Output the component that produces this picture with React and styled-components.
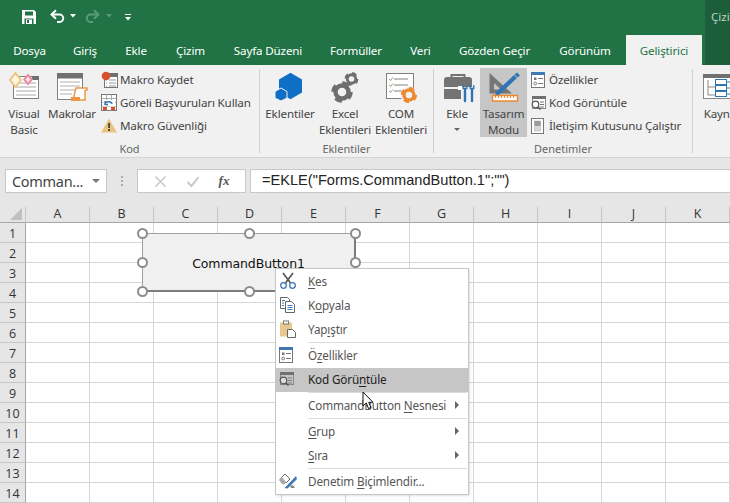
import React from "react";
import styled, { createGlobalStyle } from "styled-components";

const Global = createGlobalStyle`
  html, body { margin: 0; padding: 0; background: #fff; overflow: hidden; }
  body { font-family: "Open Sans", "Noto Sans", sans-serif; }
`;
const UI = `"Noto Sans", "Open Sans", sans-serif`;

const Page = styled.div`position: relative; width: 730px; height: 503px; overflow: hidden; background: #fff;`;
const Top = styled.div`display: flex; height: 65px; background: #217346;`;
const TopMain = styled.div`width: 705px; display: flex; flex-direction: column;`;
const Qat = styled.div`height: 35px; display: flex; align-items: flex-start; padding: 9px 0 0 21px; box-sizing: border-box;`;
const Tabs = styled.div`height: 30px; display: flex;`;
const Tab = styled.div`
  width: ${p => p.$w}px; display: flex; align-items: center; justify-content: center;
  font: 11.6px ${UI}; white-space: nowrap; letter-spacing: -0.15px;
  color: ${p => (p.$active ? "#217346" : "#fff")};
  background: ${p => (p.$active ? "#f1f1f1" : "transparent")};
`;
const Contextual = styled.div`
  width: 25px; background: #1c5e39; color: #b9d2c4; font: 11.6px ${UI}; padding: 9px 0 0 6px; box-sizing: border-box; overflow: hidden; white-space: nowrap;
`;

const Ribbon = styled.div`display: flex; height: 93px; background: #f1f1f1; border-bottom: 1px solid #d4d4d4; box-sizing: border-box; overflow: hidden;`;
const Group = styled.div`
  width: ${p => p.$w}px; flex: none; position: relative; display: flex; flex-direction: column; box-sizing: border-box;
  padding-top: 3px;
`;
const Sep = styled.div`width: 1px; flex: none; margin: 4px 0 4px; background: #d0d0d0;`;
const GroupBody = styled.div`display: flex; height: 69px;`;
const GroupName = styled.div`
  text-align: center; font: 11px/16px ${UI}; color: #666; margin-top: 4px;
`;
const Large = styled.div`
  width: ${p => p.$w}px; flex: none; height: 69px; display: flex; flex-direction: column; align-items: center;
  background: ${p => (p.$on ? "#c6c6c6" : "transparent")};
  font: 11.6px/16px ${UI}; color: #444; letter-spacing: -0.15px;
  svg { flex: none; display: block; }
`;
const LargeText = styled.span`white-space: nowrap; text-align: center;`;
const Caret = styled.span`
  width: 0; height: 0; margin-top: 6px; border: 3px solid transparent; border-top: 3px solid #666; border-bottom: 0;
`;
const SmallCol = styled.div`display: flex; flex-direction: column; margin-left: ${p => p.$ml}px;`;
const Small = styled.div`
  height: 23px; display: flex; align-items: center; font: 11.6px ${UI}; color: #444; white-space: nowrap; letter-spacing: -0.15px;
  svg { flex: none; }
`;

const FormulaBar = styled.div`
  height: 49px; background: #e6e6e6; display: flex; align-items: flex-start; padding: 11px 0 0 5px; box-sizing: border-box;
`;
const Field = styled.div`
  height: 24px; box-sizing: border-box; background: #fff; border: 1px solid #c8c8c8; display: flex; align-items: center;
`;
const NameBox = styled(Field)`width: 102px; font: 14.5px ${UI}; color: #444; padding-left: 6px; justify-content: space-between; letter-spacing: -0.3px;`;
const Drop = styled.span`
  width: 0; height: 0; margin-right: 6px; border: 4px solid transparent; border-top: 4px solid #777; border-bottom: 0;
`;
const Dots = styled.div`
  width: 30px; flex: none; display: flex; flex-direction: column; align-items: center; gap: 2px; padding-top: 7px;
  span { width: 2px; height: 2px; background: #aaa; }
`;
const FxBox = styled(Field)`width: 109px; justify-content: space-around; padding: 0 6px; margin-right: 4px;`;
const Fx = styled.span`font: italic bold 13px "Liberation Serif", serif; color: #555;`;
const Formula = styled(Field)`
  flex: 1; border-right: 0; font: 14.6px "Liberation Sans", Arial, sans-serif; color: #222; padding: 0 0 2px 11px; white-space: nowrap;
`;

const Sheet = styled.div`
  display: grid; grid-template-columns: 26px repeat(11, 64px); grid-template-rows: 16px repeat(14, 20px);
`;
const Corner = styled.div`background: #e6e6e6; border-bottom: 1px solid #a6a6a6; border-right: 1px solid #c6c6c6; box-sizing: border-box; display: flex; justify-content: flex-end; align-items: flex-end; padding: 0 3px 2px 0;`;
const CornerMark = styled.span`width: 0; height: 0; border-style: solid; border-width: 0 0 12px 12px; border-color: transparent transparent #c0c0c0 transparent;`;
const ColHead = styled.div`
  background: #e6e6e6; border-bottom: 1px solid #a6a6a6; border-right: 1px solid #c6c6c6; box-sizing: border-box;
  font: 12.5px/14px "Open Sans", sans-serif; color: #333; text-align: center;
`;
const RowHead = styled.div`
  background: #e6e6e6; border-bottom: 1px solid #c6c6c6; border-right: 1px solid #a6a6a6; box-sizing: border-box;
  font: 12.5px/21px "Open Sans", sans-serif; color: #333; text-align: center;
`;
const Cell = styled.div`border-right: 1px solid #d6d6d6; border-bottom: 1px solid #d6d6d6; box-sizing: border-box; background: #fff;`;

const FormButton = styled.div`
  position: absolute; left: 142px; top: 233px; width: 214px; height: 59px; box-sizing: border-box;
  background: #f0f0f0; border-top: 1px solid #a0a0a0; border-left: 1px solid #a0a0a0; border-right: 2px solid #7c7c7c; border-bottom: 2px solid #7c7c7c;
  display: flex; align-items: center; justify-content: center; padding-top: 2px;
  font: 12.5px "DejaVu Sans", Verdana, sans-serif; color: #111; letter-spacing: -0.1px;
`;
const Handle = styled.span`
  position: absolute; width: 11px; height: 11px; box-sizing: border-box; border-radius: 50%;
  background: #fff; border: 2px solid #8c8c8c; left: ${p => p.$x - 5.5}px; top: ${p => p.$y - 5.5}px;
`;

const Menu = styled.div`
  position: absolute; left: 275px; top: 268px; width: 194px; height: 227px; box-sizing: border-box;
  background: #fff; border: 1px solid #c6c6c6; padding-top: 1px; box-shadow: 1px 1px 2px rgba(0,0,0,.12);
`;
const MenuRow = styled.div`
  height: 24px; display: flex; align-items: center; position: relative;
  font: 11.7px ${UI}; letter-spacing: -0.15px; white-space: nowrap; padding-bottom: 2px; box-sizing: border-box;
  color: ${p => (p.$hot ? "#222" : "#555")};
  background: ${p => (p.$hot ? "#c6c6c6" : "transparent")};
  u { text-underline-offset: 2px; text-decoration-thickness: 1px; }
`;
const MenuIcon = styled.span`width: 32px; flex: none; display: flex; justify-content: center; align-items: center; padding-right: 8px; box-sizing: border-box;`;
const MenuText = styled.span`flex: 1;`;
const Arrow = styled.span`
  width: 0; height: 0; margin-right: 9px; border-style: solid; border-width: 4px 0 4px 4px; border-color: transparent transparent transparent #666;
`;
const MenuSep = styled.div`height: 2px; box-sizing: border-box; margin: 0 1px 0 32px; border-top: 1px solid #dcdcdc;`;
const Cursor = styled.svg`position: absolute; left: 362px; top: 391px;`;

/* ---- drawings ---- */
const SaveIcon = () => (
  <svg width="16" height="16" viewBox="0 0 16 16"><path d="M1 1h12l2 2v12H1z" fill="#fff"/><rect x="4" y="2.500" width="8" height="4" fill="#217346"/><rect x="3.500" y="9.500" width="9" height="5.500" fill="#217346"/><rect x="5" y="10.500" width="6" height="4.500" fill="#fff"/><rect x="6" y="11" width="2" height="3" fill="#217346"/></svg>
);
const UndoIcon = ({ c, flip }) => (
  <svg width="15" height="15" viewBox="0 0 15 15" style={flip ? { transform: "scaleX(-1)" } : undefined}>
    <path d="M2 5.500h7.500a3.500 3.500 0 0 1 0 7.500H7" fill="none" stroke={c} strokeWidth="2"/><path d="M6 1.200 1.500 5.500 6 9.800" fill="none" stroke={c} strokeWidth="2"/>
  </svg>
);
const QatCaret = ({ c, ml, mr }) => (
  <svg width="6" height="4" style={{ margin: `5px ${mr}px 0 ${ml}px` }}><path d="M0 0h6L3 3.500z" fill={c}/></svg>
);
const CustomIcon = () => (
  <svg width="6" height="7" style={{ marginTop: 5 }}><rect width="6" height="1" fill="#fff"/><path d="M0 3h6L3 6.500z" fill="#fff"/></svg>
);
const VbIcon = () => (
  <svg width="40" height="38" viewBox="0 0 40 38">
    <rect x="9.500" y="8.500" width="25" height="22" fill="#fff" stroke="#808080"/><rect x="28" y="8" width="7" height="4" fill="#707070"/>
    <path d="M12 15h20M12 19h20M12 23h20M12 27h20" stroke="#a8a8a8"/>
    <path d="M11.500 5 17 12l-5.500 7L6 12z" fill="#fdf6e3" stroke="#ecc67e" strokeWidth="2"/>
    <path d="M24 7l3.800 4.500L24 16l-3.800-4.500z" fill="#fde7ea" stroke="#e98fa0" strokeWidth="2"/>
  </svg>
);
const MacroIcon = () => (
  <svg width="40" height="38" viewBox="0 0 40 38">
    <rect x="5.500" y="5.500" width="25" height="26" fill="#fff" stroke="#808080"/><rect x="5" y="5" width="26" height="5.500" fill="#707070"/>
    <path d="M8 14h20M8 18h20M8 22h20M8 26h12" stroke="#b0b0b0"/>
    <path d="M24 20h11v2l-2 .5V32H21z" fill="#fff" stroke="#ee9644" strokeWidth="1.500"/><rect x="19" y="29" width="9" height="4" fill="#ee9644"/>
  </svg>
);
const Hex = ({ cx, cy, r }) => {
  const h = r * 1.15;
  return <path d={`M${cx} ${cy - h}L${cx + r} ${cy - h / 2}V${cy + h / 2}L${cx} ${cy + h}L${cx - r} ${cy + h / 2}V${cy - h / 2}Z`} fill="#0f6fc6"/>;
};
const AddinIcon = () => (
  <svg width="40" height="38" viewBox="0 0 40 38"><Hex cx={20.500} cy={18} r={11.500}/><path d="M11 20l6 3.500V30l-6 3-6-3v-6.500z" fill="#0f6fc6" stroke="#f1f1f1" strokeWidth="1"/></svg>
);
const Gear = ({ cx, cy, r, c }) => (
  <g>
    <circle cx={cx} cy={cy} r={r * 0.62} fill="none" stroke={c} strokeWidth={r * 0.42}/>
    <circle cx={cx} cy={cy} r={r * 0.86} fill="none" stroke={c} strokeWidth={r * 0.32} strokeDasharray={`${r * 0.68} ${r * 0.67}`}/>
  </g>
);
const GearsIcon = () => (
  <svg width="40" height="38" viewBox="0 0 40 38"><Gear cx={17} cy={24} r={10.500} c="#6e6e6e"/><Gear cx={26.500} cy={11} r={6.800} c="#6e6e6e"/></svg>
);
const ComIcon = () => (
  <svg width="40" height="38" viewBox="0 0 40 38">
    <rect x="5.500" y="5.500" width="27" height="25" fill="#fff" stroke="#808080"/>
    <path d="M13 11h14M13 17h14M13 23h8" stroke="#808080"/><path d="M8 11l1.500 1.500L12 9.500M8 17l1.500 1.500L12 15.500M8 23l1.500 1.500L12 21.500" fill="none" stroke="#7aa86e"/>
    <circle cx="28" cy="27" r="8.500" fill="#f1f1f1"/><Gear cx={28} cy={27} r={8} c="#ec8a34"/>
  </svg>
);
const ToolboxIcon = () => (
  <svg width="40" height="38" viewBox="0 0 40 38">
    <path d="M14.500 9V7h13v2" fill="none" stroke="#737373" strokeWidth="2"/>
    <path d="M7 12a3 3 0 0 1 3-3h22a3 3 0 0 1 3 3v7H7z" fill="#737373"/><path d="M7 21h17v10H7z" fill="#737373"/>
    <rect x="21" y="18" width="4" height="4" fill="#fff"/>
    <path d="M28 21v12M35 21v12" stroke="#2f75b5" strokeWidth="2.400" strokeLinecap="round"/><path d="M26.200 17v3.500h3.600V17M33.200 17v3.500h3.600V17" fill="none" stroke="#2f75b5" strokeWidth="1.300"/>
  </svg>
);
const DesignIcon = () => (
  <svg width="40" height="38" viewBox="0 0 40 38">
    <path d="M5.500 5v20.500H28z" fill="#767676"/><path d="M10 15v6.500h7z" fill="#c6c6c6"/>
    <path d="M12 24 30 7l3 3L15 27l-4 1z" fill="#2f75b5"/><path d="M30.500 6.500 33 4.500l3 3-2.500 2z" fill="#2f75b5"/>
    <rect x="8.500" y="27.500" width="25" height="5.500" fill="#fff" stroke="#ec8a34" strokeWidth="1.500"/><path d="M11.500 28v2M14.500 28v2M17.500 28v2M20.500 28v2M23.500 28v2M26.500 28v2M29.500 28v2" stroke="#ec8a34"/>
  </svg>
);
const Rec = () => (
  <svg width="19" height="18" viewBox="0 0 19 18"><rect x="3.500" y="2.500" width="13" height="14" fill="#fff" stroke="#777"/><rect x="3" y="2" width="14" height="4" fill="#707070"/><path d="M8 9h7M8 12h7M8 15h7M5 9h1M5 12h1M5 15h1" stroke="#999"/><circle cx="5" cy="5" r="4.300" fill="#d9502e"/></svg>
);
const Rel = () => (
  <svg width="19" height="18" viewBox="0 0 19 18"><rect x=".5" y=".5" width="15" height="16" fill="#fff" stroke="#777"/><path d="M.5 4.500h15M5.500 .5v16M10.500 .5v16M.5 8.500h15M.5 12.500h15" stroke="#aaa"/><rect x="2" y="6" width="12" height="6.500" fill="#fff"/><path d="M4 10c0-3 7-3 7 0M4 7v3.500h3" fill="none" stroke="#2f75b5" strokeWidth="1.300"/><rect x="2" y="13" width="4" height="3" fill="#d9502e"/><rect x="10" y="13" width="4" height="3" fill="#d9502e"/></svg>
);
const Warn = () => (
  <svg width="19" height="18" viewBox="0 0 19 18"><path d="M8 1.500 16 15.500H0z" fill="#eac37f"/><rect x="7.200" y="6" width="1.800" height="5" fill="#444"/><rect x="7.200" y="12" width="1.800" height="2" fill="#444"/></svg>
);
const Props = ({ s = 18 }) => (
  <svg width={s} height={s} viewBox="0 0 18 18"><rect x=".5" y="1.500" width="13" height="15" fill="#fff" stroke="#777"/><rect x="0" y="1" width="14" height="3" fill="#3f78b5"/><rect x="3" y="6.500" width="2.500" height="2.500" fill="#777"/><circle cx="4.200" cy="12.500" r="1.400" fill="none" stroke="#777"/><path d="M7 7.500h5M7 12.500h5" stroke="#777"/></svg>
);
const CodeIcon = ({ dark }) => (
  <svg width="18" height="18" viewBox="0 0 18 18"><rect x="1.500" y="2.500" width="13" height="12" fill={dark ? "#c6c6c6" : "#fff"} stroke="#888"/><rect x="1" y="2" width="14" height="3" fill="#707070"/><path d="M9 8h4M9 10.500h4M9 13h4" stroke="#777"/><circle cx="4.500" cy="10.500" r="3.300" fill={dark ? "#ddd" : "#fff"} stroke="#555" strokeWidth="1.200"/><path d="M7 13l2.500 2.500" stroke="#555" strokeWidth="1.600"/></svg>
);
const DialogIcon = () => (
  <svg width="18" height="18" viewBox="0 0 18 18"><rect x=".5" y="1.500" width="12" height="15" fill="#fff" stroke="#777"/><rect x="3.500" y="4" width="6" height="10" fill="#d8d8d8" stroke="#aaa" strokeWidth=".5"/><rect x="3.500" y="4" width="6" height="5" fill="#9a9a9a"/></svg>
);
const TreeIcon = () => (
  <svg width="40" height="38" viewBox="0 0 40 38"><rect x=".5" y="6.500" width="39" height="24" fill="#fff" stroke="#888"/><rect x="0" y="6" width="40" height="4" fill="#707070"/><path d="M5 12v15h7M5 19h7" fill="none" stroke="#888"/><path d="M12 14h20M12 20h20M12 26h20" stroke="#2f75b5" strokeWidth="1"/><rect x="12.500" y="11.500" width="11" height="5" fill="#fff" stroke="#2f75b5"/><rect x="12.500" y="17.500" width="11" height="5" fill="#fff" stroke="#2f75b5"/><rect x="12.500" y="23.500" width="11" height="5" fill="#fff" stroke="#2f75b5"/></svg>
);
const Scissors = () => (
  <svg width="18" height="18" viewBox="0 0 18 18"><path d="M4 1l7.500 10M14 1 6.500 11" stroke="#555" strokeWidth="1.600"/><circle cx="4.500" cy="13.500" r="2.800" fill="none" stroke="#3f78b5" strokeWidth="1.300"/><circle cx="13.500" cy="13.500" r="2.800" fill="none" stroke="#3f78b5" strokeWidth="1.300"/></svg>
);
const CopyIcon = () => (
  <svg width="18" height="18" viewBox="0 0 18 18"><path d="M1.500 1.500h7l2 2v9h-9z" fill="#fff" stroke="#666"/><path d="M6.500 5.500h6l3 3v8h-9z" fill="#fff" stroke="#666"/><path d="M3 4.500h3M3 7h2M3 9.500h2M8.500 9.500h5M8.500 11.500h5M8.500 13.500h5" stroke="#3f78b5"/></svg>
);
const PasteIcon = () => (
  <svg width="18" height="18" viewBox="0 0 18 18"><rect x="1" y="2.500" width="12" height="14" fill="#e8c98f"/><rect x="4.500" y="1" width="5" height="3" fill="#fff" stroke="#777"/><path d="M8.500 9.500h5l3 3v5h-8z" fill="#fff" stroke="#666"/></svg>
);
const FormatIcon = () => (
  <svg width="20" height="18" viewBox="0 0 20 18"><path d="M3 6l4-4 5 5-4 4z" fill="#fff" stroke="#666"/><path d="M1 8c1-1 1-3 3-3l4 5c-1 2-2 3-4 2z" fill="#aaa"/><path d="M18 4 8.500 14l-2 2 3 .5L19 7z" fill="#3f78b5"/><path d="M12 14l3-1 2 3h-4z" fill="#888"/></svg>
);

const TABS = [["Dosya",59],["Giriş",52],["Ekle",50],["Çizim",59],["Sayfa Düzeni",96],["Formüller",80],["Veri",49],["Gözden Geçir",99],["Görünüm",82],["Geliştirici",76,true]];
const COLS = "ABCDEFGHIJK".split("");
const ROWS = Array.from({ length: 14 }, (_, i) => i + 1);
const HANDLES = [[142,233],[249,233],[355,233],[142,262],[355,262],[142,291],[249,291]];

export default function App() {
  return (
    <Page>
      <Global />
      <Top>
        <TopMain>
          <Qat>
            <SaveIcon />
            <span style={{ width: 13 }} />
            <UndoIcon c="#fff" />
            <QatCaret c="#fff" ml={5} mr={9} />
            <UndoIcon c="#5b9a78" flip />
            <QatCaret c="#5b9a78" ml={6} mr={13} />
            <CustomIcon />
          </Qat>
          <Tabs>{TABS.map(([t, w, a]) => <Tab key={t} $w={w} $active={a}>{t}</Tab>)}</Tabs>
        </TopMain>
        <Contextual>Çizi</Contextual>
      </Top>
      <Ribbon>
        <Group $w={259}>
          <GroupBody>
            <Large $w={48}><VbIcon /><LargeText>Visual</LargeText><LargeText>Basic</LargeText></Large>
            <Large $w={48}><MacroIcon /><LargeText>Makrolar</LargeText></Large>
            <SmallCol $ml={5}>
              <Small><Rec />Makro Kaydet</Small>
              <Small><Rel />Göreli Başvuruları Kullan</Small>
              <Small><Warn />Makro Güvenliği</Small>
            </SmallCol>
          </GroupBody>
          <GroupName>Kod</GroupName>
        </Group>
        <Sep />
        <Group $w={173}>
          <GroupBody>
            <Large $w={60}><AddinIcon /><LargeText>Eklentiler</LargeText></Large>
            <Large $w={50}><GearsIcon /><LargeText>Excel</LargeText><LargeText>Eklentileri</LargeText></Large>
            <Large $w={62}><ComIcon /><LargeText>COM</LargeText><LargeText>Eklentileri</LargeText></Large>
          </GroupBody>
          <GroupName>Eklentiler</GroupName>
        </Group>
        <Sep />
        <Group $w={258}>
          <GroupBody>
            <Large $w={46}><ToolboxIcon /><LargeText>Ekle</LargeText><Caret /></Large>
            <Large $w={47} $on><DesignIcon /><LargeText>Tasarım</LargeText><LargeText>Modu</LargeText></Large>
            <SmallCol $ml={4}>
              <Small><Props />Özellikler</Small>
              <Small><CodeIcon />Kod Görüntüle</Small>
              <Small><DialogIcon />İletişim Kutusunu Çalıştır</Small>
            </SmallCol>
          </GroupBody>
          <GroupName>Denetimler</GroupName>
        </Group>
        <Sep />
        <Group $w={60}>
          <GroupBody>
            <Large $w={60}><TreeIcon /><LargeText>Kaynak</LargeText></Large>
          </GroupBody>
        </Group>
      </Ribbon>
      <FormulaBar>
        <NameBox>Comman...<Drop /></NameBox>
        <Dots><span /><span /><span /></Dots>
        <FxBox>
          <svg width="13" height="13" viewBox="0 0 13 13"><path d="M1.500 1.500l10 10M11.500 1.500l-10 10" stroke="#c8c8c8" strokeWidth="1.500"/></svg>
          <svg width="14" height="13" viewBox="0 0 14 13"><path d="M1.500 7l4 4 7-9" fill="none" stroke="#c8c8c8" strokeWidth="2"/></svg>
          <Fx>fx</Fx>
        </FxBox>
        <Formula>=EKLE("Forms.CommandButton.1";"")</Formula>
      </FormulaBar>
      <Sheet>
        <Corner><CornerMark /></Corner>
        {COLS.map(c => <ColHead key={c}>{c}</ColHead>)}
        {ROWS.map(r => (
          <React.Fragment key={r}>
            <RowHead>{r}</RowHead>
            {COLS.map(c => <Cell key={c} />)}
          </React.Fragment>
        ))}
      </Sheet>
      <FormButton>CommandButton1</FormButton>
      {HANDLES.map(([x, y]) => <Handle key={`${x}-${y}`} $x={x} $y={y} />)}
      <Menu>
        <MenuRow><MenuIcon><Scissors /></MenuIcon><MenuText><u>K</u>es</MenuText></MenuRow>
        <MenuRow><MenuIcon><CopyIcon /></MenuIcon><MenuText>K<u>o</u>pyala</MenuText></MenuRow>
        <MenuRow><MenuIcon><PasteIcon /></MenuIcon><MenuText>Yap<u>ı</u>ştır</MenuText></MenuRow>
        <MenuSep />
        <MenuRow><MenuIcon><Props /></MenuIcon><MenuText>Ö<u>z</u>ellikler</MenuText></MenuRow>
        <MenuRow $hot><MenuIcon><CodeIcon dark /></MenuIcon><MenuText>Kod Görü<u>n</u>tüle</MenuText></MenuRow>
        <MenuSep />
        <MenuRow><MenuIcon /><MenuText>CommandButton <u>N</u>esnesi</MenuText><Arrow /></MenuRow>
        <MenuSep />
        <MenuRow><MenuIcon /><MenuText><u>G</u>rup</MenuText><Arrow /></MenuRow>
        <MenuRow><MenuIcon /><MenuText><u>S</u>ıra</MenuText><Arrow /></MenuRow>
        <MenuSep />
        <MenuRow><MenuIcon><FormatIcon /></MenuIcon><MenuText>Denetim <u>B</u>içimlendir...</MenuText></MenuRow>
      </Menu>
      <Cursor width="13" height="19" viewBox="0 0 13 19"><path d="M1 1v14l3.300-3 2.200 5.500 2.500-1-2.300-5.200H11z" fill="#fff" stroke="#111" strokeWidth="1"/></Cursor>
    </Page>
  );
}
